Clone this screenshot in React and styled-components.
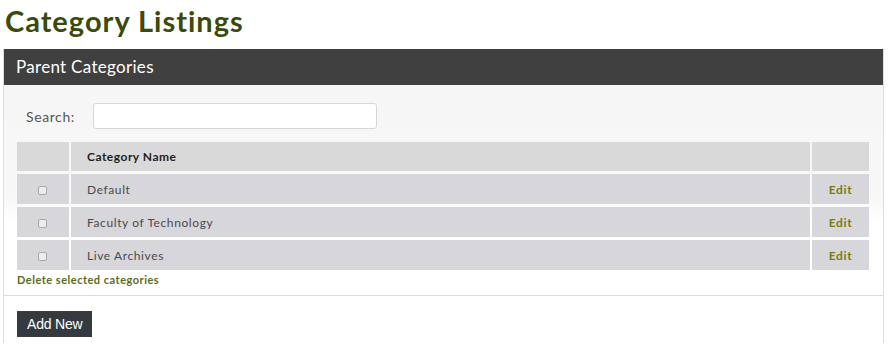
import React from "react";
import styled, { createGlobalStyle } from "styled-components";

const GlobalStyle = createGlobalStyle`
  body {
    margin: 0;
    background: #fff;
    font-family: "Lato", "Noto Sans", sans-serif;
  }
`;

const Page = styled.div`
  padding: 4px 5px 0 3px;
`;

const Title = styled.h1`
  margin: 0 0 11px 2px;
  font-size: 29px;
  line-height: 34px;
  font-weight: 700;
  color: #3a4a08;
  letter-spacing: 1px;
`;

const Panel = styled.div`
  border-left: 1px solid #dedede;
  border-right: 1px solid #dedede;
`;

const PanelHeader = styled.div`
  background: #404040;
  color: #fff;
  font-size: 17px;
  height: 36px;
  line-height: 36px;
  padding-left: 12px;
  letter-spacing: 0.3px;
`;

const PanelBody = styled.div`
  background: linear-gradient(#f6f6f6, #f8f8f8 55%, #fff 65%);
  padding: 18px 14px 9px 13px;
  border-bottom: 1px solid #dcdcdc;
`;

const SearchRow = styled.label`
  display: flex;
  align-items: center;
  gap: 18px;
  padding-left: 9px;
  margin-bottom: 13px;
  font-size: 14px;
  color: #555;
  letter-spacing: 0.6px;
`;

const SearchInput = styled.input`
  width: 284px;
  height: 26px;
  box-sizing: border-box;
  border: 1px solid #d6d6d6;
  border-radius: 3px;
  background: #fff;
`;

const Table = styled.table`
  border-collapse: separate;
  border-spacing: 2px 3px;
  margin: -3px -2px 0;
  width: calc(100% + 4px);
`;

const Th = styled.th`
  background: #d9d9d9;
  height: 29px;
  padding: 0 16px;
  text-align: left;
  font-size: 12px;
  font-weight: 700;
  color: #1e1e1e;
  letter-spacing: 0.5px;
  width: ${(p) => p.$w || "auto"};
`;

const Td = styled.td`
  background: #d7d6db;
  height: 30px;
  padding: 0 16px;
  font-size: 12px;
  color: #4a4a4a;
  letter-spacing: 0.6px;
  text-align: ${(p) => p.$align || "left"};
`;

const Check = styled.input`
  appearance: none;
  margin: 0 0 0 -1px;
  width: 9px;
  height: 9px;
  border: 1px solid #a8a8a8;
  border-radius: 2px;
  background: #ececec;
  vertical-align: middle;
`;

const EditLink = styled.a`
  color: #7a7a10;
  font-weight: 700;
  font-size: 12px;
  text-decoration: none;
  letter-spacing: 0.6px;
`;

const DeleteLink = styled.a`
  display: block;
  color: #5e6a1e;
  font-weight: 700;
  font-size: 11px;
  letter-spacing: 0.5px;
  text-decoration: none;
`;

const Footer = styled.div`
  padding: 15px 13px 6px;
`;

const AddButton = styled.button`
  background: #343a40;
  color: #fff;
  border: none;
  font-family: "Liberation Sans", Arial, sans-serif;
  font-size: 14px;
  height: 26px;
  padding: 0 10px;
  letter-spacing: -0.2px;
`;

const categories = ["Default", "Faculty of Technology", "Live Archives"];

export default function App() {
  return (
    <>
      <GlobalStyle />
      <Page>
        <Title>Category Listings</Title>
        <Panel>
          <PanelHeader>Parent Categories</PanelHeader>
          <PanelBody>
            <SearchRow>
              Search:
              <SearchInput type="text" />
            </SearchRow>
            <Table>
              <thead>
                <tr>
                  <Th $w="20px"></Th>
                  <Th>Category Name</Th>
                  <Th $w="25px"></Th>
                </tr>
              </thead>
              <tbody>
                {categories.map((c) => (
                  <tr key={c}>
                    <Td $align="center">
                      <Check type="checkbox" />
                    </Td>
                    <Td>{c}</Td>
                    <Td $align="center">
                      <EditLink href="#">Edit</EditLink>
                    </Td>
                  </tr>
                ))}
              </tbody>
            </Table>
            <DeleteLink href="#">Delete selected categories</DeleteLink>
          </PanelBody>
          <Footer>
            <AddButton>Add New</AddButton>
          </Footer>
        </Panel>
      </Page>
    </>
  );
}
